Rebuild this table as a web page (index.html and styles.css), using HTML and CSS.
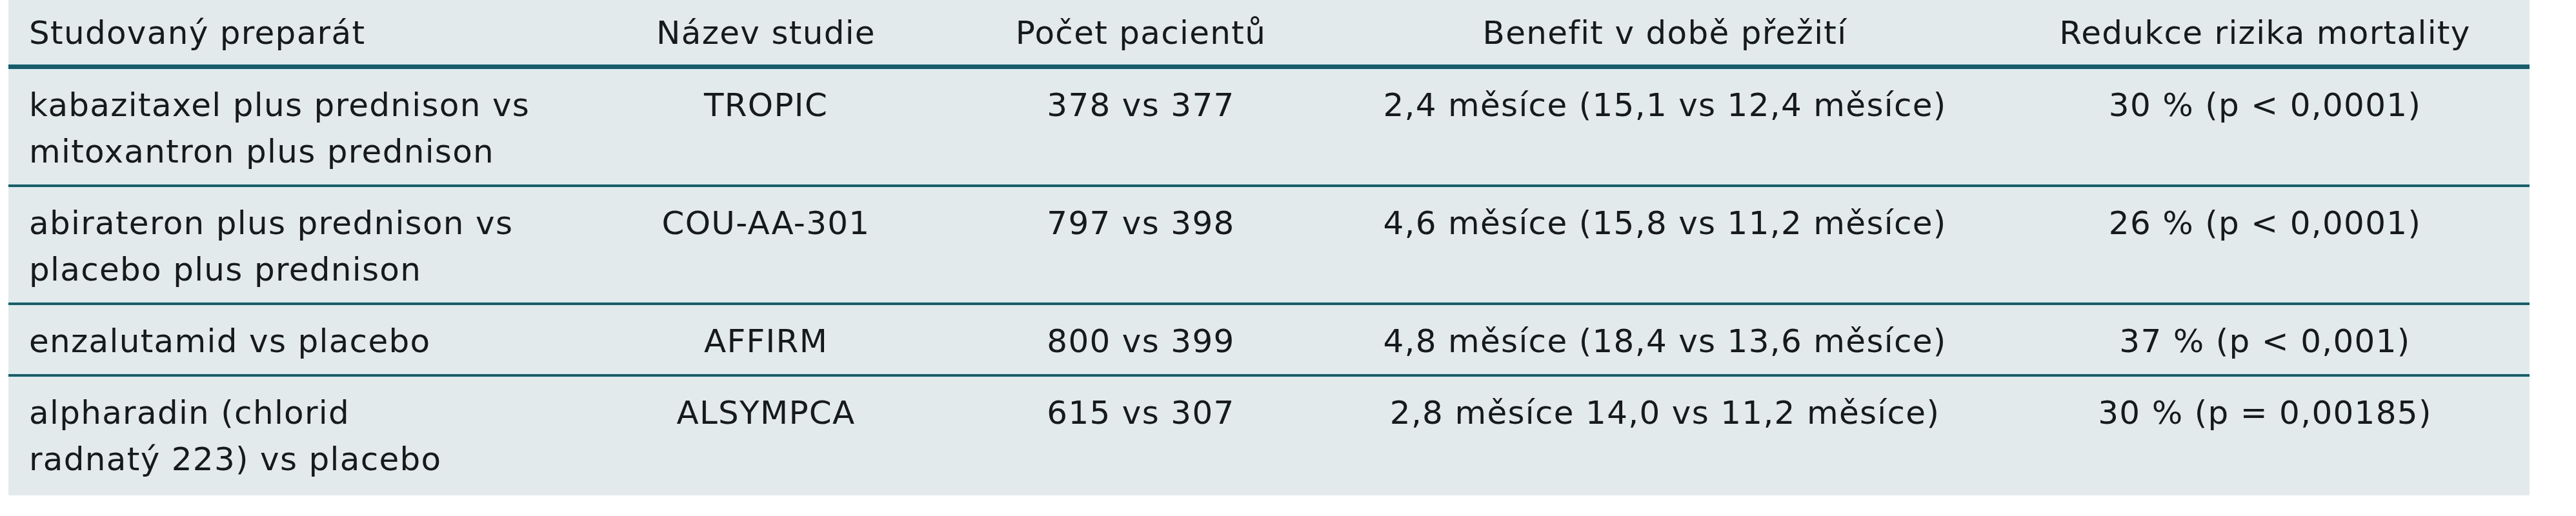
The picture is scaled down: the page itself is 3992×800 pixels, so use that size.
FILE: index.html
```html
<!DOCTYPE html>
<html lang="cs">
<head>
<meta charset="utf-8">
<title>Tabulka</title>
<link rel="stylesheet" href="styles.css">
</head>
<body>
<div class="table">
  <div class="row head">
    <div class="cell first">Studovaný preparát</div>
    <div class="cell">Název studie</div>
    <div class="cell">Počet pacientů</div>
    <div class="cell">Benefit v době přežití</div>
    <div class="cell">Redukce rizika mortality</div>
  </div>
  <div class="rule thick"></div>
  <div class="row">
    <div class="cell first">kabazitaxel plus prednison vs<br>mitoxantron plus prednison</div>
    <div class="cell">TROPIC</div>
    <div class="cell">378 vs 377</div>
    <div class="cell">2,4 měsíce (15,1 vs 12,4 měsíce)</div>
    <div class="cell">30 % (p &lt; 0,0001)</div>
  </div>
  <div class="rule"></div>
  <div class="row">
    <div class="cell first">abirateron plus prednison vs<br>placebo plus prednison</div>
    <div class="cell">COU-AA-301</div>
    <div class="cell">797 vs 398</div>
    <div class="cell">4,6 měsíce (15,8 vs 11,2 měsíce)</div>
    <div class="cell">26 % (p &lt; 0,0001)</div>
  </div>
  <div class="rule"></div>
  <div class="row">
    <div class="cell first">enzalutamid vs placebo</div>
    <div class="cell">AFFIRM</div>
    <div class="cell">800 vs 399</div>
    <div class="cell">4,8 měsíce (18,4 vs 13,6 měsíce)</div>
    <div class="cell">37 % (p &lt; 0,001)</div>
  </div>
  <div class="rule"></div>
  <div class="row last">
    <div class="cell first">alpharadin (chlorid<br>radnatý 223) vs placebo</div>
    <div class="cell">ALSYMPCA</div>
    <div class="cell">615 vs 307</div>
    <div class="cell">2,8 měsíce 14,0 vs 11,2 měsíce)</div>
    <div class="cell">30 % (p = 0,00185)</div>
  </div>
</div>
</body>
</html>
```

FILE: styles.css
```css
html, body {
  margin: 0;
  padding: 0;
  background: #ffffff;
}

body {
  font-family: "DejaVu Sans", "Liberation Sans", sans-serif;
  font-size: 50px;
  letter-spacing: 1.3px;
  color: #161a1c;
}

.table {
  margin-left: 13px;
  width: 3907px;
  background: #e3eaec;
}

.row {
  display: grid;
  grid-template-columns: 885px 578px 584px 1040px 820px;
  padding: 20px 0 15px;
  line-height: 72px;
}

.row.head {
  padding: 15px 0 13px;
}

.row.last {
  padding-bottom: 20px;
}

.cell {
  text-align: center;
  white-space: nowrap;
}

.cell.first {
  text-align: left;
  padding-left: 32px;
}

.rule {
  height: 4px;
  background: #1d5d66;
  box-shadow: 0 -1px 0 #cdeef3, 0 1px 0 #cdeef3;
}

.rule.thick {
  height: 7px;
  background: #1a5c6b;
}
```
